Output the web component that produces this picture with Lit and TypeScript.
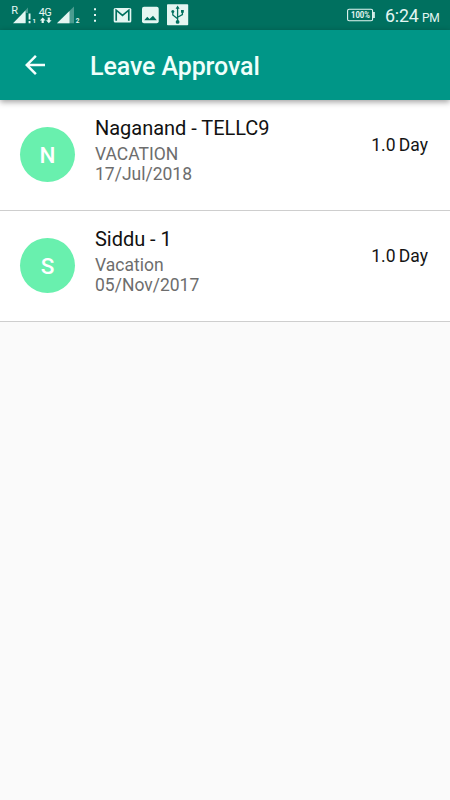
import { LitElement, html, css } from "lit";
import { customElement, property } from "lit/decorators.js";

interface LeaveRequest {
  name: string;
  kind: string;
  date: string;
  duration: string;
}

const REQUESTS: LeaveRequest[] = [
  { name: "Naganand - TELLC9", kind: "VACATION", date: "17/Jul/2018", duration: "1.0 Day" },
  { name: "Siddu - 1", kind: "Vacation", date: "05/Nov/2017", duration: "1.0 Day" },
];

@customElement("status-bar")
class StatusBar extends LitElement {
  static styles = css`
    :host {
      display: flex;
      align-items: flex-start;
      height: 30px;
      background: #00705f;
      color: #e4f6f2;
      fill: currentColor;
    }
    svg {
      display: block;
      flex: none;
    }
    .label {
      font-family: Roboto, sans-serif;
    }
    .dim {
      fill: #4b9c90;
    }
    .hole {
      fill: #00705f;
    }
    .spacer {
      flex: 1;
    }
    .clock {
      font: 17.8px/30px Roboto, sans-serif;
      margin: 1px 10px 0 9px;
      width: 55px;
      white-space: nowrap;
      letter-spacing: -0.2px;
    }
    .clock small {
      font-size: 12px;
      margin-left: -0.8px;
    }
  `;

  render() {
    return html`
      <svg width="90" height="30" viewBox="0 0 90 30">
        <text class="label" x="11.3" y="14.3" font-size="11">R</text>
        <path class="dim" d="M22 14L28 7.5V13H26V23H22z" />
        <path d="M13 23.3L25.5 10.5V23.3z" />
        <path d="M28.6 13.5h1.9v6h-1.9zM28.6 21h1.9v2.3h-1.9z" />
        <text class="label" x="32.4" y="23.3" font-size="6" font-weight="700">1</text>
        <text class="label" x="38.8" y="15.6" font-size="11" textLength="13">4G</text>
        <path d="M42.7 17.4L45.5 20.4H43.8V23H41.6V20.4H39.9zM48.8 23.2L46 20.2h1.7v-2.6h2.2v2.6h1.7z" />
        <path class="dim" d="M57 23.3L74 6.5V23.3z" />
        <path d="M57 23.3L69.5 11V23.3z" />
        <text class="label" x="75.8" y="23.3" font-size="6.5" font-weight="700">2</text>
      </svg>
      <svg width="20" height="30" viewBox="90 0 20 30">
        <path d="M94 8.2h2v2h-2zM94 14h2v2h-2zM94 19.8h2v2h-2z" />
      </svg>
      <svg width="28" height="30" viewBox="110 0 28 30">
        <rect x="113.7" y="8" width="17.6" height="14.4" rx="1.5" />
        <path d="M116.2 20.8V10.2L122.5 15.4L128.8 10.2V20.8" fill="none" stroke="#00705f" stroke-width="1.7" />
      </svg>
      <svg width="26" height="30" viewBox="138 0 26 30">
        <rect x="142" y="6.7" width="16.7" height="16.5" rx="2" />
        <path class="hole" d="M144.2 20.3L147.3 16.8L149.5 19L153 15.8L156.8 20.3z" />
      </svg>
      <svg width="28" height="30" viewBox="164 0 28 30">
        <rect x="167" y="4.3" width="21.2" height="21" rx=".8" />
        <g fill="none" stroke="#00705f" stroke-width="1.3">
          <path d="M177.6 21V7.5M172.8 12.2V15L177.6 18.7M182.4 11.5V14.5L177.6 17.2" />
        </g>
        <path class="hole" d="M177.6 5.6L179.6 8.8H175.6zM181 9.9h2.8v2.8h-2.8z" />
        <circle class="hole" cx="172.8" cy="11.6" r="1.5" />
        <circle class="hole" cx="177.6" cy="21.9" r="1.9" />
      </svg>
      <div class="spacer"></div>
      <svg width="30" height="30" viewBox="346 0 30 30">
        <rect x="347.6" y="9.3" width="25" height="11.4" rx="1.5" fill="none" stroke="currentColor" stroke-width="1.1" />
        <path d="M373.1 12h1.7v6h-1.7z" />
        <text class="label" x="351" y="18.2" font-size="8.6" font-weight="700" textLength="19" lengthAdjust="spacingAndGlyphs">100%</text>
      </svg>
      <div class="clock">6:24 <small>PM</small></div>
    `;
  }
}

@customElement("leave-row")
class LeaveRow extends LitElement {
  @property({ attribute: false }) request!: LeaveRequest;

  static styles = css`
    :host {
      display: flex;
      box-sizing: border-box;
      height: 111px;
      padding: 0 22px 0 20px;
      background: #fff;
      border-bottom: 1px solid #cecece;
      font-family: Roboto, sans-serif;
    }
    .avatar {
      width: 55px;
      height: 55px;
      margin: 27.4px 20px 0 0;
      border-radius: 50%;
      background: #69f0ae;
      color: #fff;
      font: 500 22.5px/56px Roboto, sans-serif;
      text-align: center;
    }
    .details {
      flex: 1;
      padding-top: 16px;
    }
    .name {
      font-size: 20px;
      line-height: 24px;
      color: #111;
      margin-bottom: 4px;
      letter-spacing: -0.03px;
    }
    .meta {
      font-size: 17.5px;
      line-height: 20px;
      color: #6d6d6d;
    }
    .duration {
      padding-top: 35px;
      font-size: 17.5px;
      line-height: 21px;
      color: #151515;
      word-spacing: -1px;
    }
  `;

  render() {
    const { name, kind, date, duration } = this.request;
    return html`
      <div class="avatar">${name[0]}</div>
      <div class="details">
        <div class="name">${name}</div>
        <div class="meta">${kind}</div>
        <div class="meta">${date}</div>
      </div>
      <div class="duration">${duration}</div>
    `;
  }
}

@customElement("app-root")
class AppRoot extends LitElement {
  static styles = css`
    :host {
      display: flex;
      flex-direction: column;
      height: 800px;
      overflow: hidden;
      background: #fafafa;
    }
    .toolbar {
      position: relative;
      z-index: 1;
      display: flex;
      align-items: center;
      height: 70px;
      flex: none;
      background: #009687;
      color: #fff;
      box-shadow: 0 2px 6px rgba(0, 0, 0, 0.38);
    }
    .back {
      display: block;
      margin: 0 40px 0 20px;
      fill: #f4fffd;
    }
    .title {
      margin: 4px 0 0;
      font: 500 25px/30px Roboto, sans-serif;
      letter-spacing: -0.1px;
      color: #effffb;
    }
  `;

  render() {
    return html`
      <status-bar></status-bar>
      <header class="toolbar">
        <svg class="back" width="30" height="30" viewBox="0 0 24 24">
          <path d="M20 11H7.83l5.59-5.59L12 4l-8 8 8 8 1.41-1.41L7.83 13H20v-2z" />
        </svg>
        <h1 class="title">Leave Approval</h1>
      </header>
      <main>${REQUESTS.map((r) => html`<leave-row .request=${r}></leave-row>`)}</main>
    `;
  }
}
